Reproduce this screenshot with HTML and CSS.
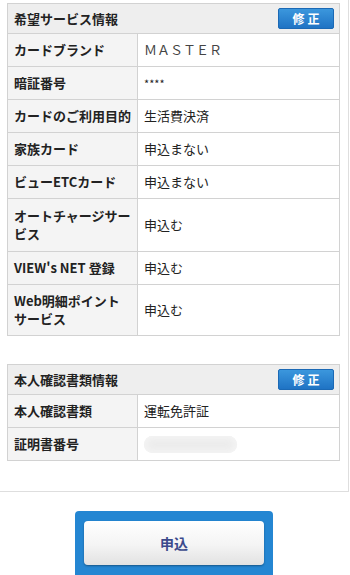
FILE: index.html
```html
<!DOCTYPE html>
<html lang="ja">
<head>
  <meta charset="UTF-8" />
  <meta name="viewport" content="width=device-width, initial-scale=1.0"/>
  <title>申込内容確認</title>
  <link rel="stylesheet" href="styles.css">
</head>
<body>

<div class="content">
  <table class="info">
    <colgroup><col class="col-label"><col></colgroup>
    <tr>
      <th class="head" colspan="2">
        <div class="head-inner">
          <span>希望サービス情報</span>
          <button class="edit">修正</button>
        </div>
      </th>
    </tr>
    <tr><th>カードブランド</th><td class="brand">ＭＡＳＴＥＲ</td></tr>
    <tr><th>暗証番号</th><td class="pin">****</td></tr>
    <tr><th>カードのご利用目的</th><td>生活費決済</td></tr>
    <tr><th>家族カード</th><td>申込まない</td></tr>
    <tr><th>ビューETCカード</th><td>申込まない</td></tr>
    <tr class="tall"><th>オートチャージサービス</th><td>申込む</td></tr>
    <tr><th>VIEW's NET 登録</th><td>申込む</td></tr>
    <tr><th>Web明細ポイントサービス</th><td>申込む</td></tr>
  </table>

  <table class="info">
    <colgroup><col class="col-label"><col></colgroup>
    <tr>
      <th class="head" colspan="2">
        <div class="head-inner">
          <span>本人確認書類情報</span>
          <button class="edit">修正</button>
        </div>
      </th>
    </tr>
    <tr><th>本人確認書類</th><td>運転免許証</td></tr>
    <tr><th>証明書番号</th><td><span class="masked"></span></td></tr>
  </table>
</div>

<div class="submit-area">
  <div class="submit-frame">
    <button class="submit">申込</button>
  </div>
</div>

</body>
</html>
```

FILE: styles.css
```css
* {
  box-sizing: border-box;
}

body {
  margin: 0;
  background: #fff;
  font-family: "Noto Sans CJK JP", "Noto Sans", sans-serif;
  color: #222;
  font-size: 13px;
}

.content {
  width: 349px;
  padding: 3px 9px 30px 7px;
  border-right: 1px solid #dedede;
  border-bottom: 1px solid #dedede;
}

.info {
  width: 333px;
  border-collapse: collapse;
  table-layout: fixed;
  margin-bottom: 28px;
}

.info:last-child {
  margin-bottom: 0;
}

.col-label {
  width: 130px;
}

.info th,
.info td {
  border: 1px solid #d2d2d2;
  padding: 7px 5px 7px 6px;
  line-height: 18px;
  text-align: left;
  vertical-align: middle;
}

.info .tall th,
.info .tall td {
  padding: 8px 5px 8px 6px;
}

.info th {
  background: #f4f4f4;
  font-weight: bold;
}

.info .head {
  background: #eeeeee;
  padding: 4px 5px 4px 6px;
}

.head-inner {
  display: flex;
  justify-content: space-between;
  align-items: center;
}

.edit {
  width: 56px;
  height: 21px;
  padding: 0;
  border: 1px solid #1b69b5;
  border-radius: 2px;
  background: linear-gradient(#3b97dd, #1f73c4);
  color: #fff;
  font-family: inherit;
  font-size: 12px;
  font-weight: bold;
  letter-spacing: 3px;
  text-indent: 3px;
}

.info td {
  font-weight: normal;
}

.brand {
  color: #444;
  font-weight: 300;
}

.pin {
  font-size: 11px;
}

.masked {
  display: block;
  width: 93px;
  height: 17px;
  border-radius: 9px;
  background: #ececec;
  box-shadow: inset 0 0 6px 3px #f4f4f4;
}

.submit-area {
  display: flex;
  justify-content: center;
  padding: 19px 0 0 0;
}

.submit-frame {
  width: 198px;
  height: 70px;
  margin-right: 2px;
  padding: 10px 9px 0;
  border-radius: 4px 4px 0 0;
  background: #2486d2;
}

.submit {
  display: block;
  width: 180px;
  height: 44px;
  border: none;
  border-radius: 4px;
  background: linear-gradient(#ffffff, #f4f4f4 55%, #e2e2e2);
  box-shadow: 0 1px 2px rgba(0, 0, 0, 0.35);
  color: #3b4a8c;
  font-family: inherit;
  font-size: 14px;
  font-weight: bold;
}
```
